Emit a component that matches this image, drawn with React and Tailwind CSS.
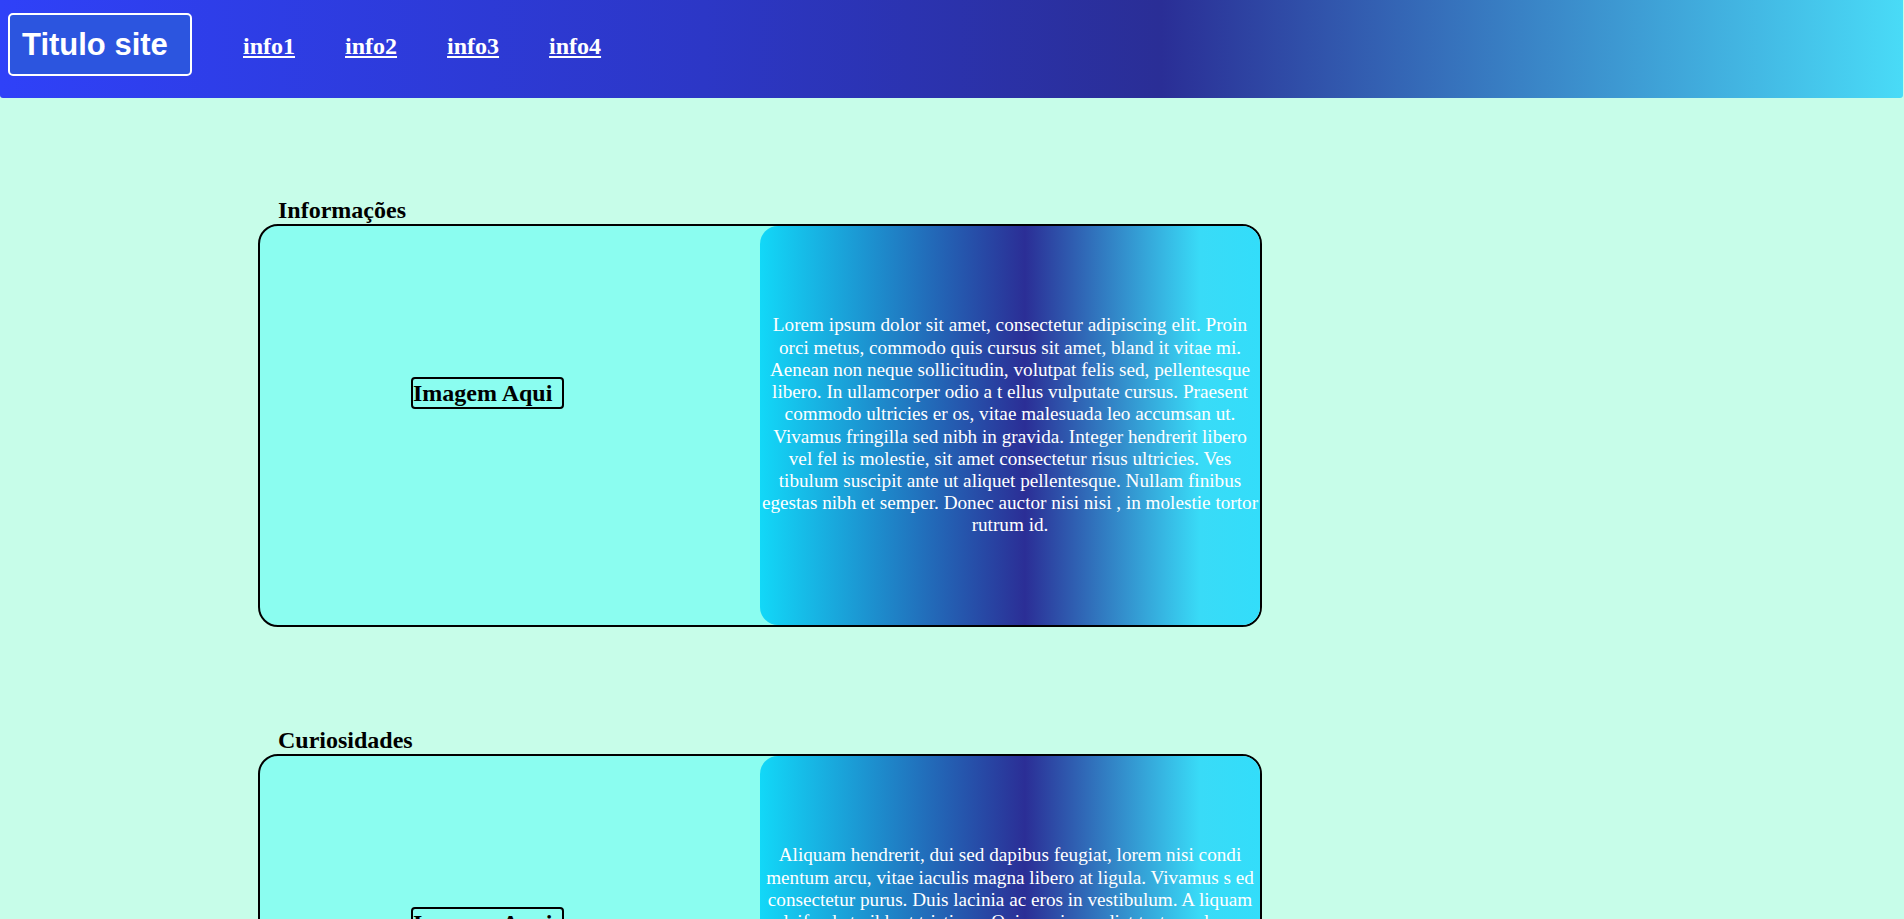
import React from "react";

const serif = "font-['Liberation_Serif','Times_New_Roman',serif]";

function Section({ title, text, first }) {
  return (
    <section className={first ? "mt-[98px]" : "mt-[99px]"}>
      <h2 className={`${serif} pl-[20px] text-[24px] font-bold leading-[28px] text-black`}>
        {title}
      </h2>
      <div className="flex h-[403px] w-[1004px] rounded-[20px] border-2 border-black bg-[#8bfdf0]">
        <div className="w-[500px] pl-[151px] pt-[151px]">
          <h2
            className={`${serif} inline-block rounded-[4px] border-2 border-black pr-[10px] text-[24px] font-bold leading-[28px] text-black`}
          >
            Imagem Aqui
          </h2>
        </div>
        <div className="flex w-[500px] items-center rounded-[18px] bg-[linear-gradient(to_right,#12d8f8,#2b2e96_53%,#39dbf7_88%,#33ddfa)]">
          <p className={`${serif} w-full text-center text-[19.2px] leading-[22.2px] text-white`}>
            {text}
          </p>
        </div>
      </div>
    </section>
  );
}

export default function App() {
  return (
    <div className="min-h-screen bg-[#c7fde9] pb-[120px]">
      <header className="flex h-[98px] w-[1903px] items-start rounded-b-[3px] bg-[linear-gradient(to_right,#2f41f8,#2c37c6_37%,#2a2e96_61%,#49dbf7)]">
        <div className="ml-[8px] mt-[13px] flex h-[63px] w-[184px] items-center rounded-[5px] border-2 border-white bg-[#2c55df] pl-3">
          <span className="font-['Liberation_Sans',Arial,sans-serif] text-[31px] font-bold leading-none text-white">
            Titulo site
          </span>
        </div>
        <nav className={`${serif} ml-[51px] mt-[32px] flex gap-[50px] text-[24px] font-bold leading-[28px] text-white`}>
          <a href="#" className="underline">info1</a>
          <a href="#" className="underline">info2</a>
          <a href="#" className="underline">info3</a>
          <a href="#" className="underline">info4</a>
        </nav>
      </header>
      <main className="ml-[258px]">
        <Section
          first
          title="Informações"
          text="Lorem ipsum dolor sit amet, consectetur adipiscing elit. Proin orci metus, commodo quis cursus sit amet, bland it vitae mi. Aenean non neque sollicitudin, volutpat felis sed, pellentesque libero. In ullamcorper odio a t ellus vulputate cursus. Praesent commodo ultricies er os, vitae malesuada leo accumsan ut. Vivamus fringilla sed nibh in gravida. Integer hendrerit libero vel fel is molestie, sit amet consectetur risus ultricies. Ves tibulum suscipit ante ut aliquet pellentesque. Nullam finibus egestas nibh et semper. Donec auctor nisi nisi , in molestie tortor rutrum id."
        />
        <Section
          title="Curiosidades"
          text="Aliquam hendrerit, dui sed dapibus feugiat, lorem nisi condi mentum arcu, vitae iaculis magna libero at ligula. Vivamus s ed consectetur purus. Duis lacinia ac eros in vestibulum. A liquam eleifend at nibh ut tristique. Quisque imperdiet tortor vel sem vestibulum, at fermentum lacus tincidunt. Sed euismod, nisl vel porta tincidunt, eros nunc feugiat ipsum, vitae vulputate nulla sapien non massa. Mauris at consequat metus, eget suscipit urna. Nam pretium magna sit amet velit lacinia, nec aliquam est pulvinar. Pellentesque habitant morbi tristique senectus et netus et malesuada fames ac turpis egestas."
        />
      </main>
    </div>
  );
}
